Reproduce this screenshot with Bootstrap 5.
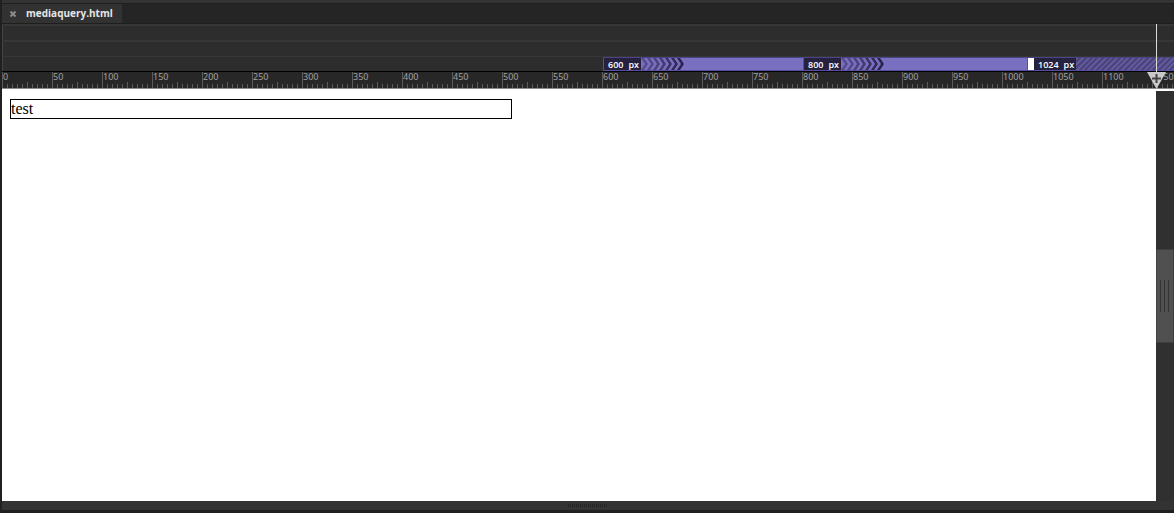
<!DOCTYPE html>
<html lang="en">
<head>
  <meta charset="UTF-8">
  <meta name="viewport" content="width=device-width, initial-scale=1">
  <title>mediaquery.html</title>
  <link href="https://cdn.jsdelivr.net/npm/bootstrap@5.3.0/dist/css/bootstrap.min.css" rel="stylesheet">
  <style>
    body {
      background-color: #333;
      font-family: "Noto Sans", "Open Sans", sans-serif;
      border-left: 2px solid #202020;
    }
    .tab-strip {
      height: 21px;
      margin-top: 3px;
      background: #252525;
      border-top: 1px solid #202020;
      border-bottom: 1px solid #1e1e1e;
    }
    .file-tab {
      width: 120px;
      padding-left: 7px;
      gap: 9px;
      background: #323232;
      color: #e6e6e6;
      font: bold 10px/18px "Open Sans", sans-serif;
    }
    .close-tab { line-height: 0; }
    .file-tab a { color: inherit; padding-bottom: 1px; }

    /* media query lanes */
    .lane {
      height: 16px;
      background: #2d2d2d;
      border-top: 2px solid #373737;
      border-left: 1px solid #444;
    }
    .query-lane { height: 15px; padding-left: 600px; border-top-width: 1px; }
    .query {
      background: #7a70c2;
      border-top: 1px solid #4b4484;
      border-left: 1px solid #574f9b;
      border-bottom: 1px solid #574f9b;
    }
    .query-600 { width: 200px; }
    .query-800 { width: 224px; }
    .query-1024 {
      background: repeating-linear-gradient(135deg, #4b4478 0 2px, #61599f 2px 4px);
    }
    .query-label {
      width: 37px;
      gap: 5px;
      padding-left: 4px;
      background: #25213f;
      color: #fff;
      font: 600 9px/13px "Open Sans", sans-serif;
    }
    .query-1024 .query-label { width: 42px; }
    .handle { width: 6px; background: #fff; }

    .ruler {
      height: 18px;
      border-top: 1px solid #000;
      border-bottom: 1px solid #8c8c8c;
      color: #a0a0a0;
      font-size: 9px;
      line-height: 10px;
      background:
        repeating-linear-gradient(90deg, #5c5c5c 0 1px, transparent 1px 50px) 0 0 / 100% 16px no-repeat,
        repeating-linear-gradient(90deg, transparent 0 25px, #5c5c5c 25px 26px, transparent 26px 50px) 0 10px / 100% 6px no-repeat,
        repeating-linear-gradient(90deg, #5c5c5c 0 1px, transparent 1px 5px) 0 12px / 100% 4px no-repeat,
        #272727;
    }
    .ruler span { flex: 0 0 50px; padding-left: 1px; }

    /* current viewport width marker */
    .marker { top: 0; right: 7px; width: 21px; height: 65px; }

    .preview {
      background: #fff;
      color: #000;
      padding: 10px 8px;
      font: 16px/18px "Liberation Serif", serif;
    }
    .test-box { width: 502px; border: 1px solid #000; }
    .v-scroll { width: 18px; background: #303030; border-top: 2px solid #fff; }
    .v-thumb {
      height: 94px;
      gap: 3px;
      padding-right: 2px;
      background: #505050;
      border: 1px solid #3e3e3e;
      border-left-color: #444;
    }
    .v-thumb i { width: 1px; height: 32px; background: #343434; }
    .h-scroll { height: 12px; border-bottom: 3px solid #202020; }
    .h-grip {
      width: 40px;
      height: 3px;
      background: repeating-linear-gradient(90deg, #262626 0 1px, transparent 1px 2px);
    }
  </style>
</head>
<body class="min-vh-100 d-flex flex-column overflow-hidden">

  <header class="tab-strip d-flex">
    <div class="file-tab d-flex align-items-center">
      <button type="button" class="close-tab bg-transparent border-0 p-0" aria-label="Close tab">
        <svg width="8" height="8" viewBox="0 0 8 8"><path d="M1.500 1.500l5 5M6.500 1.500l-5 5" stroke="#8a8a8a" stroke-width="2"/></svg>
      </button>
      <a href="#preview" class="text-decoration-none">mediaquery.html</a>
    </div>
  </header>

  <section class="position-relative" aria-label="Media queries">
    <div class="lane"></div>
    <div class="lane"></div>
    <div class="lane query-lane d-flex">
      <div class="query query-600 d-flex flex-shrink-0">
        <div class="query-label d-flex"><span>600</span><span>px</span></div>
        <svg width="44" height="12" viewBox="0 0 44 12" fill="#29234b">
          <path opacity=".45" d="M0 0h3l4 6-4 6H0l4-6z"/>
          <path opacity=".5" d="M6 0h3l4 6-4 6H6l4-6z"/>
          <path opacity=".6" d="M12 0h3l4 6-4 6h-3l4-6z"/>
          <path opacity=".7" d="M18 0h3l4 6-4 6h-3l4-6z"/>
          <path opacity=".8" d="M24 0h3l4 6-4 6h-3l4-6z"/>
          <path opacity=".9" d="M30 0h3l4 6-4 6h-3l4-6z"/>
          <path d="M36 0h3l4 6-4 6h-3l4-6z"/>
        </svg>
      </div>
      <div class="query query-800 d-flex flex-shrink-0">
        <div class="query-label d-flex"><span>800</span><span>px</span></div>
        <svg width="44" height="12" viewBox="0 0 44 12" fill="#29234b">
          <path opacity=".45" d="M0 0h3l4 6-4 6H0l4-6z"/>
          <path opacity=".5" d="M6 0h3l4 6-4 6H6l4-6z"/>
          <path opacity=".6" d="M12 0h3l4 6-4 6h-3l4-6z"/>
          <path opacity=".7" d="M18 0h3l4 6-4 6h-3l4-6z"/>
          <path opacity=".8" d="M24 0h3l4 6-4 6h-3l4-6z"/>
          <path opacity=".9" d="M30 0h3l4 6-4 6h-3l4-6z"/>
          <path d="M36 0h3l4 6-4 6h-3l4-6z"/>
        </svg>
      </div>
      <div class="query query-1024 d-flex flex-grow-1">
        <div class="handle"></div>
        <div class="query-label d-flex"><span>1024</span><span>px</span></div>
      </div>
    </div>
    <div class="ruler d-flex overflow-hidden" id="ruler"></div>
    <svg class="marker position-absolute" viewBox="0 0 21 65">
      <path d="M10.500 0v50" stroke="#dcdcd6"/>
      <path d="M1 48h19L10.500 65z" fill="#c9c9c9"/>
      <path d="M10.500 50v9M6 54.500h9" stroke="#444" stroke-width="2"/>
    </svg>
  </section>

  <div class="d-flex flex-grow-1">
    <main class="preview flex-grow-1" id="preview">
      <div class="test-box">test</div>
    </main>
    <div class="v-scroll d-flex flex-column justify-content-center">
      <div class="v-thumb d-flex align-items-center justify-content-center"><i></i><i></i><i></i></div>
    </div>
  </div>
  <footer class="h-scroll d-flex align-items-center justify-content-center">
    <div class="h-grip"></div>
  </footer>

  <script src="https://cdn.jsdelivr.net/npm/bootstrap@5.3.0/dist/js/bootstrap.bundle.min.js"></script>
  <script>
    const ruler = document.getElementById("ruler");
    for (let px = 0; px <= 1150; px += 50) {
      const label = document.createElement("span");
      label.textContent = px;
      ruler.appendChild(label);
    }
  </script>
</body>
</html>
